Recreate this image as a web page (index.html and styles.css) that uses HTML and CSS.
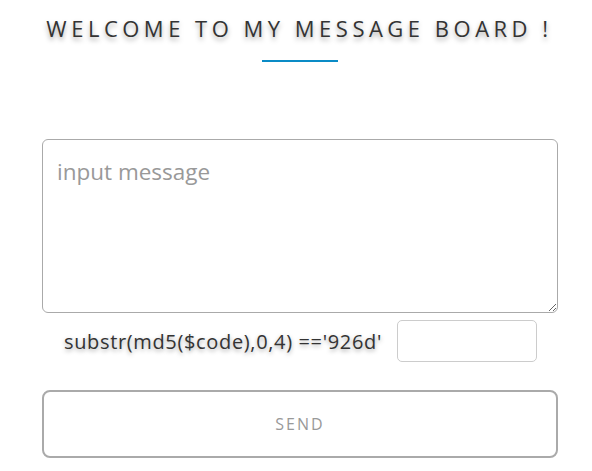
FILE: index.html
```html
<!DOCTYPE html>
<html>
<head>
<meta charset="utf-8">
<link rel="stylesheet" href="styles.css">
</head>
<body>
<div class="board">
  <h1 class="title">WELCOME TO MY MESSAGE BOARD !</h1>
  <div class="rule"></div>
  <form class="form">
    <textarea class="message" placeholder="input message"></textarea>
    <div class="code-row">
      <label class="code-label">substr(md5($code),0,4) =='926d'</label>
      <input class="code-input" type="text">
    </div>
    <button class="send" type="button">SEND</button>
  </form>
</div>
</body>
</html>
```
FILE: styles.css
```css
html, body {
  margin: 0;
  padding: 0;
  background: #fff;
}
body {
  font-family: "Open Sans", "Noto Sans", sans-serif;
}
.board {
  width: 516px;
  margin-left: 42px;
  display: flex;
  flex-direction: column;
  align-items: center;
}
.title {
  margin: 14px 0 0 -1px;
  font-size: 22px;
  font-weight: 400;
  letter-spacing: 4.5px;
  color: #333;
  text-shadow: 0 3px 5px rgba(0,0,0,0.35);
  line-height: 28px;
  white-space: nowrap;
}
.rule {
  width: 76px;
  height: 2px;
  background: #0a8bc6;
  margin-top: 18px;
}
.form {
  width: 100%;
  margin-top: 77px;
  display: flex;
  flex-direction: column;
}
.message {
  box-sizing: border-box;
  width: 100%;
  height: 174px;
  border: 1px solid #aaa;
  border-radius: 6px;
  padding: 16px 14px;
  font-family: inherit;
  font-size: 22.5px;
  color: #333;
  resize: vertical;
  margin: 0;
  display: block;
}
.message::placeholder {
  color: #999;
}
.code-row {
  display: flex;
  align-items: center;
  margin-top: 7px;
  padding-left: 22px;
}
.code-label {
  font-size: 20px;
  letter-spacing: 0.65px;
  color: #333;
  text-shadow: 0 2px 4px rgba(0,0,0,0.35);
  white-space: nowrap;
}
.code-input {
  box-sizing: border-box;
  width: 140px;
  height: 42px;
  margin: 0 0 0 15px;
  border: 1px solid #ccc;
  border-radius: 5px;
  padding: 0 8px;
  font-family: inherit;
  font-size: 16px;
}
.send {
  box-sizing: border-box;
  width: 100%;
  height: 68px;
  margin-top: 28px;
  border: 2px solid #aaa;
  border-radius: 8px;
  background: #fff;
  font-family: inherit;
  font-size: 16px;
  letter-spacing: 2px;
  color: #999;
  cursor: pointer;
}
```
